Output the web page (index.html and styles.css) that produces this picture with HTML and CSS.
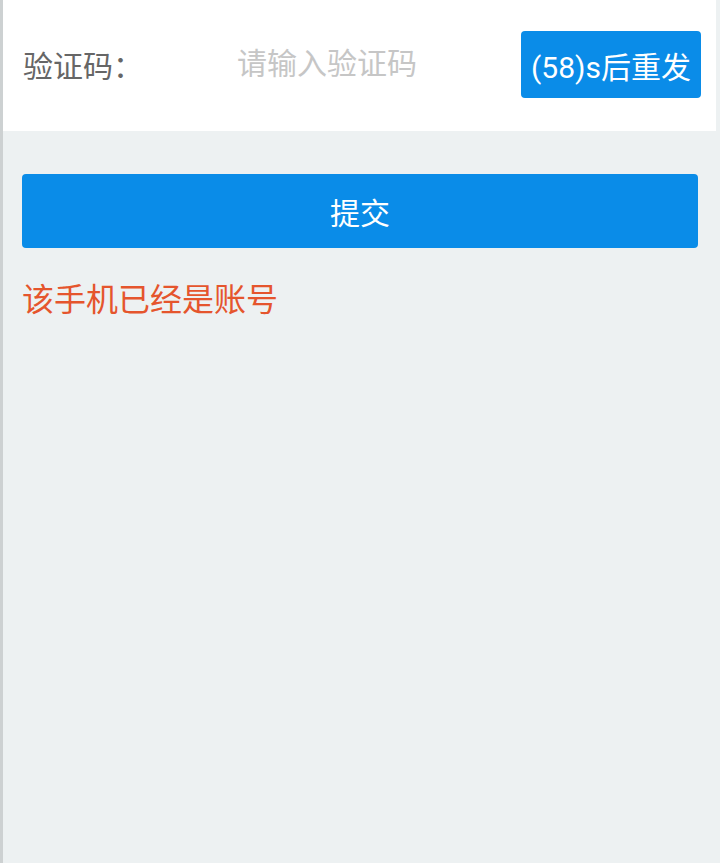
FILE: index.html
```html
<!DOCTYPE html>
<html lang="zh-CN">
<head>
    <meta charset="UTF-8">
    <meta name="viewport" content="width=device-width, initial-scale=1.0">
    <title>验证码</title>
    <link rel="stylesheet" href="styles.css">
</head>
<body>
    <div class="panel">
        <div class="code-row">
            <label class="code-label" for="code">验证码：</label>
            <input class="code-input" type="text" id="code" placeholder="请输入验证码">
            <button class="resend" type="button">(58)s后重发</button>
        </div>
    </div>

    <button class="submit" type="button">提交</button>

    <div class="error-message">该手机已经是账号</div>
</body>
</html>
```

FILE: styles.css
```css
html, body {
    height: 100%;
}

body {
    margin: 0;
    font-family: Roboto, "Noto Sans CJK SC", sans-serif;
    background-color: #edf1f2;
    border-left: 3px solid #cdd1d2;
    box-sizing: border-box;
}

.panel {
    background-color: #fff;
    height: 131px;
    margin-right: 4px;
    display: flex;
    align-items: center;
}

.code-row {
    display: flex;
    align-items: center;
    width: 100%;
    box-sizing: border-box;
    padding: 0 15px 0 20px;
}

.code-label {
    width: 214px;
    font-size: 30px;
    color: #666;
    margin-top: -4px;
}

.code-input {
    flex: 1;
    min-width: 0;
    border: none;
    outline: none;
    padding: 0;
    margin-top: -4px;
    font-family: inherit;
    font-size: 30px;
    color: #333;
    background: transparent;
}

.code-input::placeholder {
    color: #c6c6c6;
}

.resend {
    width: 180px;
    height: 67px;
    margin-top: -2px;
    padding: 0;
    border: none;
    border-radius: 4px;
    background-color: #0a8ce8;
    color: #fff;
    font-family: inherit;
    font-size: 30px;
}

.submit {
    display: block;
    width: calc(100% - 41px);
    height: 74px;
    margin: 43px 0 0 19px;
    border: none;
    border-radius: 4px;
    background-color: #0a8ce8;
    color: #fff;
    font-family: inherit;
    font-size: 30px;
}

.error-message {
    margin: 32px 0 0 19px;
    font-size: 32px;
    line-height: 40px;
    color: #e5552d;
}
```
